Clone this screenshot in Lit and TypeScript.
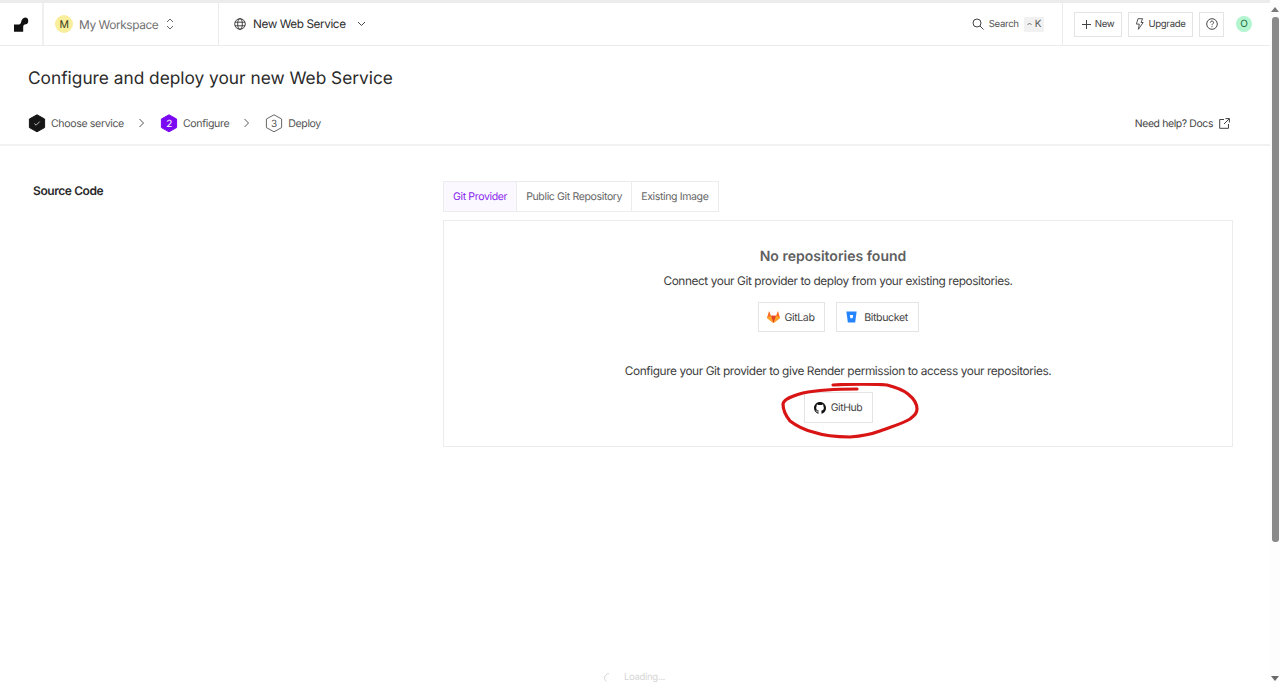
import { LitElement, html, css, svg } from 'lit';
import { customElement } from 'lit/decorators.js';

const hexPoints = '9,0.8 16.6,5 16.6,13.6 9,17.8 1.4,13.6 1.4,5';

@customElement('app-root')
export class AppRoot extends LitElement {
  static styles = css`
    :host {
      display: flex;
      width: 1280px;
      height: 682px;
      overflow: hidden;
      background: #fff;
      color: #3a3a3a;
      font-family: Inter, "Liberation Sans", sans-serif;
      font-size: 11px;
      text-rendering: geometricPrecision;
    }
    /* the reference face is narrower than Inter, tighten everything a bit */
    * { letter-spacing: -0.035em; }
    .page {
      position: relative;
      flex: 1;
      min-width: 0;
      border-top: 3px solid #ececec;
    }
    svg { display: block; flex-shrink: 0; }

    /* top bar */
    .topbar {
      display: flex;
      align-items: stretch;
      height: 42px;
      border-bottom: 1px solid #ececec;
    }
    .cell { display: flex; align-items: center; }
    .logo-cell {
      width: 42px;
      justify-content: center;
      border-right: 2px solid #f0f0f0;
      box-sizing: content-box;
    }
    .workspace {
      width: 175px;
      padding-left: 11px;
      box-sizing: border-box;
      border-right: 1px solid #ececec;
      color: #707070;
      font-size: 11.9px;
      line-height: 13px;
    }
    .avatar {
      display: flex;
      align-items: center;
      justify-content: center;
      border-radius: 50%;
      color: #3d3d20;
    }
    .avatar.m { width: 18px; height: 18px; background: #f9ee9c; font-size: 10.5px; margin-right: 6px; }
    .avatar.o { width: 16px; height: 16px; background: #b2f5cf; color: #1d6a3e; font-size: 10px; }
    .workspace svg { margin-left: 8px; }
    .service {
      flex: 1;
      padding-left: 15px;
      color: #2b2b2b;
      font-size: 11.75px;
      gap: 7px;
    }
    .service svg:last-child { margin-left: 4px; }
    .search {
      gap: 5px;
      padding-right: 18px;
      border-right: 1px solid #ececec;
      color: #555;
      font-size: 9.6px;
    }
    .kbd {
      display: flex;
      align-items: center;
      gap: 3px;
      height: 15px;
      padding: 0 3px;
      background: #f1f1f1;
      color: #555;
      font-size: 10px;
    }
    .actions {
      gap: 6px;
      padding-left: 11px;
      padding-right: 18px;
    }
    .btn {
      display: flex;
      align-items: center;
      justify-content: center;
      box-sizing: border-box;
      height: 25px;
      border: 1px solid #e4e4e4;
      color: #444;
      background: #fff;
      font-size: 9.6px;
      gap: 4px;
    }
    .btn.new { width: 48px; }
    .btn.upgrade { width: 65px; }
    .btn.help { width: 25px; margin-right: 6px; }

    /* heading and steps */
    .title {
      margin: 0;
      padding: 21px 0 0 28px;
      height: 25px;
      font-size: 17.3px;
      line-height: 24px;
      font-weight: 400;
      letter-spacing: 0;
      color: #2a2a2a;
    }
    .stepbar {
      display: flex;
      align-items: center;
      height: 42px;
      padding: 10px 40px 0 28px;
      border-bottom: 2px solid #f1f1f1;
      color: #555;
      font-size: 10.6px;
    }
    .step { display: flex; align-items: center; gap: 5px; }
    .chev { margin: 0 15px 0 14px; }
    .help-link {
      display: flex;
      align-items: center;
      gap: 6px;
      margin-left: auto;
      color: #444;
      font-size: 10.4px;
    }

    /* source code section */
    .section {
      display: grid;
      grid-template-columns: 410px 790px;
      padding: 35px 0 0 33px;
    }
    .section h2 {
      margin: 0;
      padding-top: 1px;
      font-size: 12px;
      line-height: 17px;
      font-weight: 600;
      color: #2a2a2a;
    }
    .tabs { display: flex; margin-bottom: 8px; }
    .tab {
      display: flex;
      align-items: center;
      height: 31px;
      box-sizing: border-box;
      padding: 0 9px;
      border: 1px solid #ececec;
      margin-right: -1px;
      font-size: 10.55px;
      color: #666;
    }
    .tab.active { background: #fbf9ff; color: #8a1ff0; }
    .panel {
      display: flex;
      flex-direction: column;
      align-items: center;
      box-sizing: border-box;
      height: 227px;
      padding-top: 27px;
      border: 1px solid #ececec;
    }
    .panel h3 {
      margin: 0 10px 0 0;
      font-size: 14px;
      line-height: 18px;
      font-weight: 600;
      letter-spacing: 0;
      color: #5f5f5f;
    }
    .panel p {
      margin: 0;
      font-size: 11.87px;
      line-height: 16px;
      color: #3d3d3d;
    }
    .connect { margin-top: 7px !important; }
    .row { display: flex; gap: 11px; margin: 13px 0 31px; }
    .row .btn, .github .btn { height: 30px; font-size: 10.6px; gap: 5px; }
    .row .gitlab { width: 67px; gap: 4px; }
    .row .bitbucket { width: 83px; gap: 7px; }
    .github { position: relative; margin-top: 13px; }
    .github .gh { width: 69px; height: 31px; font-size: 10.4px; }
    .scribble {
      position: absolute;
      left: -26px;
      top: -9px;
      pointer-events: none;
    }

    .loading {
      position: absolute;
      left: 604px;
      bottom: -1px;
      display: flex;
      align-items: center;
      gap: 10px;
      height: 11px;
      color: #d6d6d6;
      font-size: 9.5px;
    }

    /* scrollbar */
    .scrollbar {
      display: flex;
      flex-direction: column;
      align-items: center;
      width: 10px;
      background: #fdfdfd;
    }
    .thumb {
      width: 7px;
      height: 525px;
      margin-top: 5px;
      border-radius: 3px;
      background: #8a8a8a;
    }
    .arrow-up, .arrow-down { width: 0; height: 0; border: 4px solid transparent; }
    .arrow-up { border-top: 0; border-bottom: 5px solid #7a7a7a; margin-top: 7px; }
    .arrow-down { border-bottom: 0; border-top: 5px solid #6a6a6a; margin-top: auto; margin-bottom: 1px; }
  `;

  private hex(fill: string, stroke: string, inner: unknown) {
    return html`<svg width="18" height="19" viewBox="0 0 18 19">
      <polygon points=${hexPoints} fill=${fill} stroke=${stroke} stroke-width="1"></polygon>
      ${inner}
    </svg>`;
  }

  private chevron() {
    return html`<svg class="chev" width="7" height="10" viewBox="0 0 7 10" fill="none" stroke="#555" stroke-width="1">
      <path d="M1.5 1l4 4-4 4"></path>
    </svg>`;
  }

  render() {
    return html`
      <div class="page">
        <header class="topbar">
          <div class="cell logo-cell">
            <svg width="15" height="15" viewBox="0 0 16 15" preserveAspectRatio="none" fill="#111">
              <path d="M0 7.5h5.2c1.500 0 2-1 2.300-2.200C8 3 9.500.6 12 .6a3.400 3.400 0 0 1 .6 6.700c-1.700.3-2.800 1-2.800 2.600V14.800H0z"></path>
            </svg>
          </div>
          <div class="cell workspace">
            <span class="avatar m">M</span>My Workspace
            <svg width="8" height="12" viewBox="0 0 8 12" fill="none" stroke="#666" stroke-width="1">
              <path d="M1 4l3-3 3 3M1 8l3 3 3-3"></path>
            </svg>
          </div>
          <div class="cell service">
            <svg width="12" height="12" viewBox="0 0 12 12" fill="none" stroke="#333" stroke-width="0.9">
              <circle cx="6" cy="6" r="5.3"></circle>
              <ellipse cx="6" cy="6" rx="2.3" ry="5.3"></ellipse>
              <path d="M1 4.2h10M1 7.8h10"></path>
            </svg>
            New Web Service
            <svg width="9" height="6" viewBox="0 0 9 6" fill="none" stroke="#444" stroke-width="1">
              <path d="M1 1l3.500 3.500L8 1"></path>
            </svg>
          </div>
          <div class="cell search">
            <svg width="12" height="12" viewBox="0 0 12 12" fill="none" stroke="#444" stroke-width="1">
              <circle cx="5" cy="5" r="4"></circle>
              <path d="M8 8l3.500 3.500"></path>
            </svg>
            Search
            <span class="kbd">
              <svg width="5" height="4" viewBox="0 0 5 4" fill="none" stroke="#555" stroke-width="0.8"><path d="M.5 3l2-2 2 2"></path></svg>K
            </span>
          </div>
          <div class="cell actions">
            <div class="btn new">
              <svg width="9" height="9" viewBox="0 0 9 9" stroke="#444" stroke-width="1"><path d="M4.500 0v9M0 4.500h9"></path></svg>
              New
            </div>
            <div class="btn upgrade">
              <svg width="9" height="12" viewBox="0 0 9 12" fill="none" stroke="#444" stroke-width="0.9">
                <path d="M3 .7h4.600L6 4.500h2.200L3.400 11.300l.9-5.200H1.400z"></path>
              </svg>
              Upgrade
            </div>
            <div class="btn help">
              <svg width="12" height="12" viewBox="0 0 12 12" fill="none" stroke="#333" stroke-width="0.9">
                <circle cx="6" cy="6" r="5.3"></circle>
                <path d="M4.400 4.600c0-2 3.200-2 3.200-.1 0 1.200-1.600 1.300-1.600 2.700M6 8.200v1"></path>
              </svg>
            </div>
            <span class="avatar o">O</span>
          </div>
        </header>

        <h1 class="title">Configure and deploy your new Web Service</h1>

        <div class="stepbar">
          <div class="step">
            ${this.hex('#161616', '#161616', svg`<path d="M6.300 9.500l1.800 1.700 3.600-3.600" fill="none" stroke="#ccc" stroke-width="0.9"></path>`)}
            Choose service
          </div>
          ${this.chevron()}
          <div class="step">
            ${this.hex('#7b08f2', '#7b08f2', svg`<text x="9" y="13" text-anchor="middle" font-size="10" fill="#fff">2</text>`)}
            Configure
          </div>
          ${this.chevron()}
          <div class="step">
            ${this.hex('#fff', '#666', svg`<text x="9" y="13" text-anchor="middle" font-size="10" fill="#555">3</text>`)}
            Deploy
          </div>
          <div class="help-link">
            Need help? Docs
            <svg width="11" height="11" viewBox="0 0 11 11" fill="none" stroke="#444" stroke-width="1">
              <path d="M5 1.500H.7v8.800h8.800V6M6.500.6h3.900v3.900M10.400.6L5 6"></path>
            </svg>
          </div>
        </div>

        <section class="section">
          <h2>Source Code</h2>
          <div>
            <div class="tabs">
              <div class="tab active">Git Provider</div>
              <div class="tab">Public Git Repository</div>
              <div class="tab">Existing Image</div>
            </div>
            <div class="panel">
              <h3>No repositories found</h3>
              <p class="connect">Connect your Git provider to deploy from your existing repositories.</p>
              <div class="row">
                <div class="btn gitlab">
                  <svg width="13" height="12" viewBox="0 0 13 12">
                    <path d="M6.500 12L.3 7.200.1 6.500 1.900.4l.5 0 1.500 4.400h5.200L10.600.4l.5 0 1.800 6.100-.2.7z" fill="#fc6d26"></path>
                    <path d="M6.500 12L3.900 4.800h5.200z" fill="#e24329"></path>
                    <path d="M6.500 12L.3 7.200.1 6.500l3.800-1.700z" fill="#fca326"></path>
                    <path d="M6.500 12l6.200-4.800.2-.7-3.800-1.700z" fill="#fca326"></path>
                  </svg>
                  GitLab
                </div>
                <div class="btn bitbucket">
                  <svg width="11" height="12" viewBox="0 0 12 12" preserveAspectRatio="none">
                    <path d="M.4 .6h11.200L10 11.400H2z" fill="#2684ff"></path>
                    <path d="M4.200 4h3.600l-.5 3.200H4.700z" fill="#fff"></path>
                  </svg>
                  Bitbucket
                </div>
              </div>
              <p>Configure your Git provider to give Render permission to access your repositories.</p>
              <div class="github">
                <div class="btn gh">
                  <svg width="12" height="12" viewBox="0 0 16 16" fill="#111">
                    <path d="M8 0C3.580 0 0 3.580 0 8c0 3.540 2.290 6.530 5.470 7.590.4.070.55-.17.55-.38 0-.19-.01-.82-.01-1.490-2.010.37-2.530-.49-2.690-.94-.09-.23-.48-.94-.82-1.130-.28-.15-.68-.52-.01-.53.63-.01 1.080.58 1.230.82.720 1.210 1.870.87 2.330.66.070-.52.280-.87.510-1.070-1.780-.2-3.640-.89-3.640-3.950 0-.87.310-1.590.820-2.150-.08-.2-.36-1.020.08-2.120 0 0 .67-.21 2.200.82.64-.18 1.320-.27 2-.27s1.360.09 2 .27c1.530-1.040 2.200-.82 2.200-.82.44 1.100.16 1.920.08 2.120.51.560.82 1.270.82 2.150 0 3.070-1.870 3.750-3.650 3.950.29.250.54.730.54 1.480 0 1.070-.01 1.930-.01 2.200 0 .21.150.46.550.38A8.010 8.010 0 0 0 16 8c0-4.420-3.580-8-8-8z"></path>
                  </svg>
                  GitHub
                </div>
                <svg class="scribble" width="145" height="60" viewBox="0 0 145 60" fill="none" stroke="#d81414" stroke-width="3.200" stroke-linecap="round" stroke-linejoin="round">
                  <path d="M79 6C60 6 40 7 25 10C14 13 6 16 5 21C5 28 8 33 12 38C20 44 27 47 35 49C47 53 60 54 72 54C84 53 94 51 102 48C112 44 124 41 132 36C137 32 139 30 139 26C139 20 135 15 130 11C124 6 117 4 109 2C100 1 70 1 55 2"></path>
                </svg>
              </div>
            </div>
          </div>
        </section>

        <div class="loading">
          <svg width="10" height="10" viewBox="0 0 10 10" fill="none" stroke="#d6d6d6" stroke-width="1"><path d="M5 .6A4.400 4.400 0 0 0 .6 5c0 1.500.8 2.800 2 3.600"></path></svg>
          Loading...
        </div>
      </div>
      <div class="scrollbar">
        <div class="arrow-up"></div>
        <div class="thumb"></div>
        <div class="arrow-down"></div>
      </div>
    `;
  }
}
